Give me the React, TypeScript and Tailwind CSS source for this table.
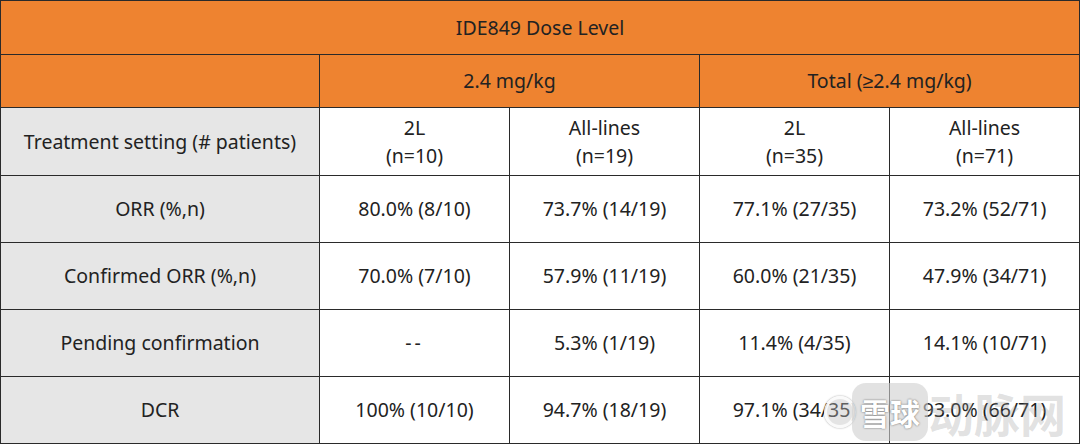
const rows: { label: string; cells: string[] }[] = [
  { label: "ORR (%,n)", cells: ["80.0% (8/10)", "73.7% (14/19)", "77.1% (27/35)", "73.2% (52/71)"] },
  { label: "Confirmed ORR (%,n)", cells: ["70.0% (7/10)", "57.9% (11/19)", "60.0% (21/35)", "47.9% (34/71)"] },
  { label: "Pending confirmation", cells: ["--", "5.3% (1/19)", "11.4% (4/35)", "14.1% (10/71)"] },
  { label: "DCR", cells: ["100% (10/10)", "94.7% (18/19)", "97.1% (34/35)", "93.0% (66/71)"] },
];

const cell = "border border-[#2a2a2a] text-center align-middle p-0";

export default function App() {
  return (
    <div className="relative w-[1080px] h-[444px] bg-white overflow-hidden text-[19.5px] leading-[28px] text-[#222] font-['Noto_Sans',sans-serif]">
      <table className="border-collapse table-fixed w-[1079px]">
        <colgroup>
          <col className="w-[319px]" />
          <col className="w-[190px]" />
          <col className="w-[190px]" />
          <col className="w-[190px]" />
          <col className="w-[190px]" />
        </colgroup>
        <tbody>
          <tr className="h-[54px] bg-[#ee8330]">
            <td colSpan={5} className={cell}>IDE849 Dose Level</td>
          </tr>
          <tr className="h-[53px] bg-[#ee8330]">
            <td className={cell}></td>
            <td colSpan={2} className={cell}>2.4 mg/kg</td>
            <td colSpan={2} className={cell}>Total (≥2.4 mg/kg)</td>
          </tr>
          <tr className="h-[68px]">
            <td className={`${cell} bg-[#e6e6e6]`}>Treatment setting (# patients)</td>
            <td className={cell}>2L<br />(n=10)</td>
            <td className={cell}>All-lines<br />(n=19)</td>
            <td className={cell}>2L<br />(n=35)</td>
            <td className={cell}>All-lines<br />(n=71)</td>
          </tr>
          {rows.map((r) => (
            <tr key={r.label} className="h-[67px]">
              <td className={`${cell} bg-[#e6e6e6]`}>{r.label}</td>
              {r.cells.map((c, j) => (
                <td key={j} className={cell}>{c === "--" ? <span className="tracking-[3px]">--</span> : c}</td>
              ))}
            </tr>
          ))}
        </tbody>
      </table>

      {/* watermark */}
      <div className="absolute left-[824px] top-[383px] flex items-center pointer-events-none">
        <div className="w-[32px] h-[32px] rounded-full border-[3px] border-white/80 bg-[#bbbbbb]/40 shadow-[0_0_2px_rgba(0,0,0,0.4)]" />
        <div className="ml-[-4px] h-[58px] px-[8px] rounded-[14px] bg-[#cfcfcf]/60 flex items-center">
          <span className="text-[30px] leading-none font-bold text-white [text-shadow:0_0_2px_rgba(0,0,0,0.6)] font-['Noto_Sans_CJK_SC',sans-serif]">雪球</span>
        </div>
        <span className="text-[46px] leading-none font-bold text-[#9a9a9a]/30 font-['Noto_Sans_CJK_SC',sans-serif]">动脉网</span>
      </div>
    </div>
  );
}
